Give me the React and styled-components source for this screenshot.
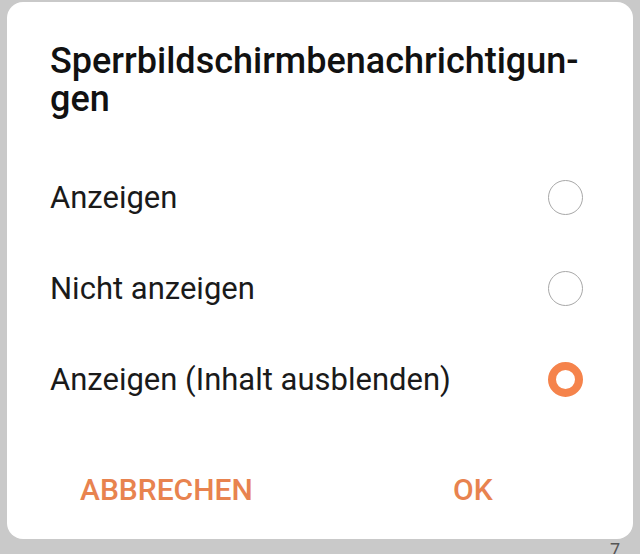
import React, { useState } from "react";
import styled, { createGlobalStyle } from "styled-components";

const Global = createGlobalStyle`
  html, body {
    margin: 0;
    padding: 0;
    background: #c9c9c9;
    font-family: Roboto, "Noto Sans", sans-serif;
  }
`;

const Screen = styled.div`
  width: 640px;
  height: 554px;
  box-sizing: border-box;
  padding: 2px 7px 0 7px;
  position: relative;
  overflow: hidden;
`;

const Dialog = styled.div`
  background: #ffffff;
  border-radius: 16px;
  height: 537px;
  box-sizing: border-box;
  padding: 40px 0 0 43px;
  display: flex;
  flex-direction: column;
`;

const Title = styled.h1`
  margin: 0;
  font-size: 36px;
  line-height: 38px;
  font-weight: 500;
  color: #111;
`;

const Options = styled.div`
  display: flex;
  flex-direction: column;
  margin-top: 34px;
`;

const Row = styled.label`
  display: flex;
  align-items: center;
  justify-content: space-between;
  height: 91px;
  padding-right: 50px;
  cursor: pointer;
`;

const Label = styled.span`
  font-size: 31px;
  color: #1a1a1a;
`;

const Radio = styled.span`
  width: 35px;
  height: 35px;
  box-sizing: border-box;
  border-radius: 50%;
  border: ${(p) => (p.checked ? "8px solid #f5834b" : "1.5px solid #a8a8a8")};
  background: #fff;
`;

const Actions = styled.div`
  display: grid;
  grid-template-columns: 373px auto;
  padding-left: 30px;
  margin-top: 47px;
`;

const Action = styled.button`
  background: none;
  border: none;
  padding: 0;
  font-family: Roboto, "Noto Sans", sans-serif;
  font-size: 30px;
  line-height: 36px;
  font-weight: 500;
  color: #e8834f;
  text-align: left;
  justify-self: start;
  cursor: pointer;
`;

const PageNum = styled.span`
  position: absolute;
  right: 20px;
  bottom: -6px;
  font-size: 18px;
  color: #555;
`;

const options = ["Anzeigen", "Nicht anzeigen", "Anzeigen (Inhalt ausblenden)"];

export default function App() {
  const [selected, setSelected] = useState(2);

  return (
    <>
      <Global />
      <Screen>
        <Dialog>
          <Title>
            Sperrbildschirmbenachrichtigun-
            <br />
            gen
          </Title>
          <Options>
            {options.map((text, index) => (
              <Row key={index} onClick={() => setSelected(index)}>
                <Label>{text}</Label>
                <Radio checked={selected === index} />
              </Row>
            ))}
          </Options>
          <Actions>
            <Action>ABBRECHEN</Action>
            <Action>OK</Action>
          </Actions>
        </Dialog>
        <PageNum>7</PageNum>
      </Screen>
    </>
  );
}
